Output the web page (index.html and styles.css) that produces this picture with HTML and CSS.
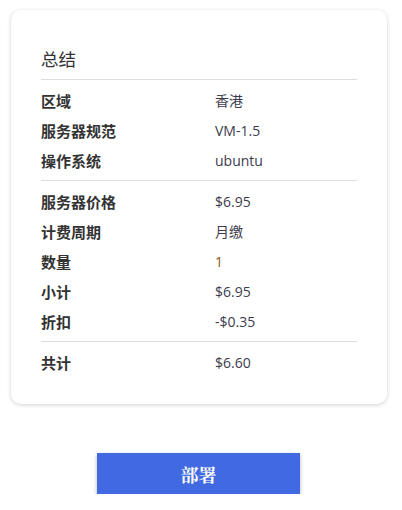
FILE: index.html
```html
<!DOCTYPE html>
<html lang="zh-CN">
<head>
  <meta charset="UTF-8" />
  <meta name="viewport" content="width=device-width, initial-scale=1.0" />
  <title>订单总结</title>
  <link rel="stylesheet" href="styles.css">
</head>
<body>
  <div class="page">
    <div class="summary">
      <h2>总结</h2>

      <div class="group">
        <div class="row"><span class="label">区域</span><span class="value">香港</span></div>
        <div class="row"><span class="label">服务器规范</span><span class="value">VM-1.5</span></div>
        <div class="row"><span class="label">操作系统</span><span class="value">ubuntu</span></div>
      </div>

      <div class="group">
        <div class="row"><span class="label">服务器价格</span><span class="value">$6.95</span></div>
        <div class="row"><span class="label">计费周期</span><span class="value">月缴</span></div>
        <div class="row"><span class="label">数量</span><span class="value qty">1</span></div>
        <div class="row"><span class="label">小计</span><span class="value">$6.95</span></div>
        <div class="row"><span class="label">折扣</span><span class="value">-$0.35</span></div>
      </div>

      <div class="group last">
        <div class="row"><span class="label">共计</span><span class="value">$6.60</span></div>
      </div>
    </div>

    <div class="actions">
      <button class="deploy">部署</button>
    </div>
  </div>
</body>
</html>
```

FILE: styles.css
```css
body {
  margin: 0;
  background: #fff;
  font-family: 'Open Sans', 'Noto Sans CJK SC', sans-serif;
  color: #333;
}

.page {
  width: 376px;
  padding: 10px 0 0 11px;
}

.summary {
  background: #fff;
  border-radius: 10px;
  box-shadow: 0 1px 4px rgba(0, 0, 0, 0.18);
  padding: 37px 30px 22px;
}

h2 {
  margin: 0 0 8px;
  font-size: 17.5px;
  line-height: 24px;
  font-weight: 400;
  color: #333;
}

.group {
  border-top: 1px solid #ddd;
  padding: 5px 0;
}

.row {
  display: grid;
  grid-template-columns: 174px 1fr;
  height: 30px;
  align-items: center;
  font-size: 14px;
}

.label {
  font-size: 15px;
  font-weight: 700;
  color: #333;
}

.value { color: #3c3c4e; }
.qty { color: #8a5a1c; }

.actions {
  display: flex;
  justify-content: center;
  padding-top: 49px;
}

.deploy {
  width: 203px;
  height: 41px;
  margin-right: 1px;
  border: none;
  border-radius: 0;
  background: #4169e1;
  color: #fff;
  font-family: 'Noto Serif CJK SC', 'Liberation Serif', serif;
  font-size: 18px;
  font-weight: 700;
  box-shadow: 0 2px 4px rgba(0, 0, 0, 0.3);
  cursor: pointer;
}
```
